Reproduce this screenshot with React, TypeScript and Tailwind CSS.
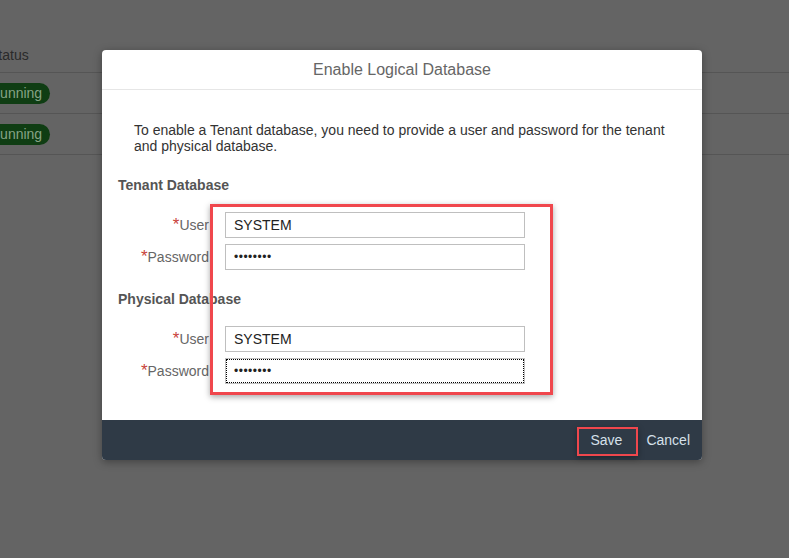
const font = { fontFamily: '"Liberation Sans", Arial, sans-serif' };

function Field({ label, value, password, focused }: { label: string; value: string; password?: boolean; focused?: boolean }) {
  return (
    <div className="flex items-center h-[26px]">
      <div className="w-[91px] text-right text-[14px] text-[#666]">
        <span className="text-[#c9423a] text-[17px] leading-none">*</span>
        {label}
      </div>
      <div className="ml-[16px] w-[300px] h-[26px] border border-[#bfbfbf] bg-white p-[1px]">
        <div
          className={
            "h-full flex items-center pl-[7px] text-[14px] text-[#222] " +
            (focused ? "outline outline-1 outline-dotted outline-black" : "")
          }
        >
          {password ? <span className="text-[12px] tracking-[0.5px]">••••••••</span> : value}
        </div>
      </div>
    </div>
  );
}

function Badge() {
  return (
    <span className="-ml-[20px] bg-[#0f3d13] text-[#86a486] text-[14px] rounded-full pl-[10px] pr-[8px] h-[21px] flex items-center">
      Running
    </span>
  );
}

export default function App() {
  return (
    <div className="relative w-[789px] h-[558px] overflow-hidden bg-[#646464]" style={font}>
      {/* dimmed background table */}
      <div className="pt-[39px] w-[789px]">
        <div className="h-[34px] flex items-center border-b border-[#555] text-[14px] text-[#2a2a2a]">
          <span className="-ml-[11px]">Status</span>
        </div>
        <div className="h-[41px] flex items-center border-b border-[#555]">
          <Badge />
        </div>
        <div className="h-[41px] flex items-center border-b border-[#555]">
          <Badge />
        </div>
      </div>

      {/* dialog */}
      <div className="absolute left-[102px] top-[50px] w-[600px] h-[410px] bg-white rounded-[4px] overflow-hidden flex flex-col shadow-[0_2px_8px_rgba(0,0,0,0.35)]">
        <div className="h-[40px] flex items-center justify-center border-b border-[#e6e6e6] text-[16px] text-[#666]">
          Enable Logical Database
        </div>
        <div className="flex-1 px-[16px]">
          <p className="mt-[32px] ml-[16px] text-[14px] leading-[16px] text-[#333] pr-[20px]">
            To enable a Tenant database, you need to provide a user and password for the tenant and physical database.
          </p>
          <div className="mt-[21px] text-[14px] font-bold text-[#555]">Tenant Database</div>
          <div className="mt-[16px] flex flex-col gap-[6px]">
            <Field label="User" value="SYSTEM" />
            <Field label="Password" value="" password />
          </div>
          <div className="mt-[19px] text-[14px] font-bold text-[#555]">Physical Database</div>
          <div className="mt-[16px] flex flex-col gap-[6px]">
            <Field label="User" value="SYSTEM" />
            <Field label="Password" value="" password focused />
          </div>
        </div>
        <div className="h-[40px] bg-[#2f3a46] flex items-center justify-end pr-[12px] gap-[24px] text-[14px] text-[#d6e0ea]">
          <span>Save</span>
          <span>Cancel</span>
        </div>
      </div>

      {/* annotation boxes */}
      <div className="absolute left-[210px] top-[204px] w-[343px] h-[191px] border-[3px] border-[#f0474d] shadow-[0_2px_6px_rgba(0,0,0,0.35)]" />
      <div className="absolute left-[577px] top-[427px] w-[61px] h-[29px] border-[2px] border-[#f0474d] shadow-[0_2px_6px_rgba(0,0,0,0.35)]" />
    </div>
  );
}
